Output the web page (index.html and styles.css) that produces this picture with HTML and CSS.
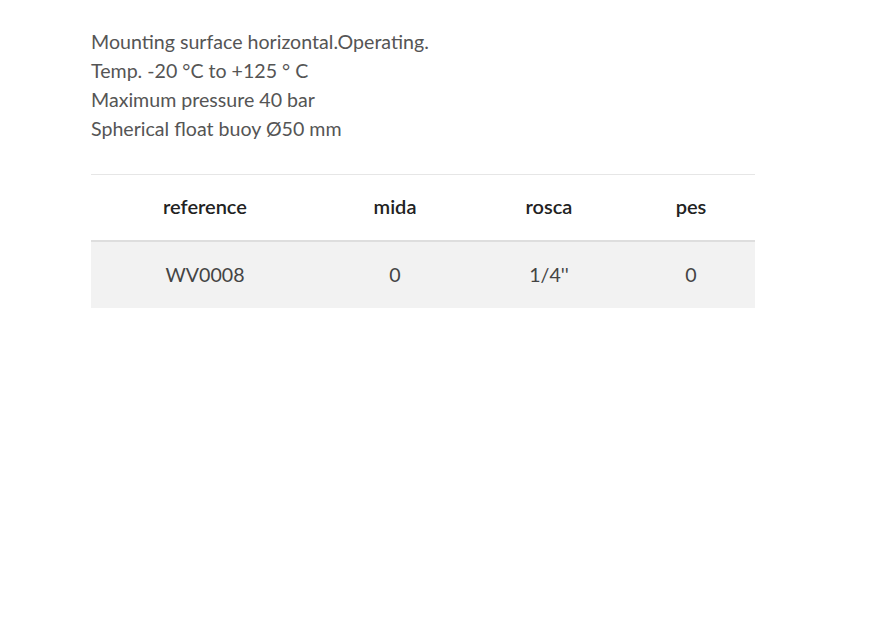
FILE: index.html
```html
<!DOCTYPE html>
<html>
<head>
<meta charset="utf-8">
<link rel="stylesheet" href="styles.css">
</head>
<body>
<div class="content">
  <div class="desc">
    <p>Mounting surface horizontal.Operating.</p>
    <p>Temp. -20 °C to +125 ° C</p>
    <p>Maximum pressure 40 bar</p>
    <p>Spherical float buoy Ø50 mm</p>
  </div>
  <div class="table">
    <div class="row head">
      <div class="cell">reference</div>
      <div class="cell">mida</div>
      <div class="cell">rosca</div>
      <div class="cell">pes</div>
    </div>
    <div class="row body">
      <div class="cell">WV0008</div>
      <div class="cell">0</div>
      <div class="cell">1/4''</div>
      <div class="cell">0</div>
    </div>
  </div>
</div>
</body>
</html>
```
FILE: styles.css
```css
html, body {
  margin: 0;
  padding: 0;
  background: #fff;
}
body {
  font-family: Lato, "Liberation Sans", sans-serif;
  color: #555;
}
.content {
  margin-left: 91px;
  width: 664px;
  padding-top: 27px;
}
.desc p {
  margin: 0;
  font-size: 19.6px;
  line-height: 29px;
}
.table {
  margin-top: 31px;
  border-top: 1px solid #e6e6e6;
}
.row {
  display: grid;
  grid-template-columns: 228px 152px 156px 128px;
  align-items: center;
  text-align: center;
  box-sizing: border-box;
}
.head {
  height: 67px;
  padding-bottom: 3px;
  border-bottom: 2px solid #dedede;
  color: #222;
  font-weight: 600;
  font-size: 20px;
}
.body {
  height: 66px;
  padding-bottom: 1px;
  background: #f2f2f2;
  color: #444;
  font-size: 19.6px;
}
```
